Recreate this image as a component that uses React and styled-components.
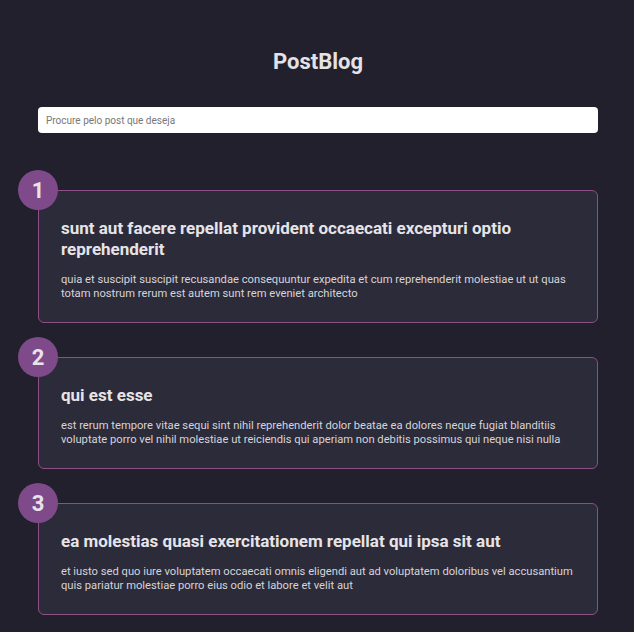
import React from 'react';
import styled, { createGlobalStyle } from 'styled-components';

const posts = [
  {
    id: 1,
    title: 'sunt aut facere repellat provident occaecati excepturi optio reprehenderit',
    body: 'quia et suscipit suscipit recusandae consequuntur expedita et cum reprehenderit molestiae ut ut quas totam nostrum rerum est autem sunt rem eveniet architecto',
  },
  {
    id: 2,
    title: 'qui est esse',
    body: 'est rerum tempore vitae sequi sint nihil reprehenderit dolor beatae ea dolores neque fugiat blanditiis voluptate porro vel nihil molestiae ut reiciendis qui aperiam non debitis possimus qui neque nisi nulla',
  },
  {
    id: 3,
    title: 'ea molestias quasi exercitationem repellat qui ipsa sit aut',
    body: 'et iusto sed quo iure voluptatem occaecati omnis eligendi aut ad voluptatem doloribus vel accusantium quis pariatur molestiae porro eius odio et labore et velit aut',
  },
];

function App() {
  return (
    <>
      <GlobalStyle />
      <Page>
        <Title>PostBlog</Title>
        <Search type="text" placeholder="Procure pelo post que deseja" />
        <PostList>
          {posts.map((p) => (
            <PostCard key={p.id}>
              <Badge>{p.id}</Badge>
              <PostTitle>{p.title}</PostTitle>
              <PostBody>{p.body}</PostBody>
            </PostCard>
          ))}
        </PostList>
      </Page>
    </>
  );
}

export default App;

const GlobalStyle = createGlobalStyle`
  * { box-sizing: border-box; }
  html, body {
    margin: 0;
    background-color: #21202c;
    font-family: Roboto, "Liberation Sans", sans-serif;
  }
`;

const Page = styled.div`
  padding: 49px 36px 40px 38px;
  display: flex;
  flex-direction: column;
`;

const Title = styled.h1`
  margin: 0 0 32px;
  text-align: center;
  font-size: 22px;
  line-height: 26px;
  font-weight: 700;
  color: #e4e2e4;
`;

const Search = styled.input`
  width: 100%;
  height: 26px;
  border: none;
  border-radius: 4px;
  background-color: #ffffff;
  padding: 0 8px;
  font-family: Roboto, "Liberation Sans", sans-serif;
  font-size: 10px;
  outline: none;
  &::placeholder {
    color: #777777;
  }
`;

const PostList = styled.div`
  display: flex;
  flex-direction: column;
  gap: 34px;
  margin-top: 57px;
`;

const PostCard = styled.div`
  position: relative;
  background-color: #2c2b39;
  border: 1px solid #8d5086;
  border-radius: 6px;
  padding: 27px 22px 21px;
`;

const Badge = styled.div`
  position: absolute;
  top: -21px;
  left: -21px;
  width: 40px;
  height: 40px;
  border-radius: 50%;
  background-color: #7f4a8a;
  color: #e6e4e8;
  display: flex;
  align-items: center;
  justify-content: center;
  font-size: 22px;
  font-weight: 700;
`;

const PostTitle = styled.h2`
  margin: 0 0 13px;
  font-size: 17px;
  line-height: 21px;
  font-weight: 700;
  color: #e6e4e8;
`;

const PostBody = styled.p`
  margin: 0;
  font-size: 11.2px;
  line-height: 14px;
  color: #d6d4da;
`;
